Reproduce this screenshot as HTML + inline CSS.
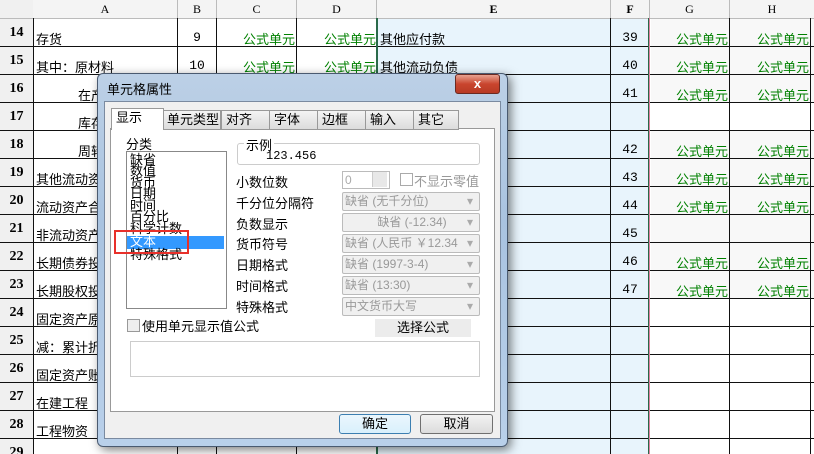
<!DOCTYPE html>
<html><head><meta charset="utf-8"><style>
html,body{margin:0;width:814px;height:454px;overflow:hidden}
body{background:#fff;font-family:"Liberation Sans","Noto Sans CJK SC",sans-serif;font-size:12px;position:relative}
.a{position:absolute;white-space:nowrap}
.rh{position:absolute;left:0;width:33px;background:#f0f0f0;font-weight:bold;font-family:"Liberation Serif","Noto Sans CJK SC",serif;font-size:14px;text-align:center;line-height:28px}
.hl{position:absolute;left:0;width:814px;height:1px;background:#111}
.vl{position:absolute;top:18px;width:1px;height:436px;background:#111}
.g{color:#008000;font-size:13px;position:absolute;text-align:right}
.t{font-size:13px;position:absolute}
.n{position:absolute;font-family:"Liberation Mono",monospace;font-size:13px;text-align:center}
.ch{position:absolute;top:0;height:18px;line-height:18px;text-align:center;font-family:"Liberation Serif",serif;font-size:12px;background:#f4f4f4;border-right:1px solid #bbb;border-bottom:1px solid #bbb}
.tab{position:absolute;top:110px;height:18px;line-height:18px;background:linear-gradient(#f4f4f4,#dcdcdc);border:1px solid #999;font-size:13px;padding-left:4px}
.sel{position:absolute;height:17px;border:1px solid #bbb;border-radius:2px;background:#f0f0f0;color:#999;font-size:12px;line-height:17px;padding-left:2px}
.sel:after{content:"▾";position:absolute;right:6px;color:#aaa}
.lb{position:absolute;font-size:13px}
.li{position:absolute;left:130px;font-size:13px;line-height:13px;height:13px}
</style></head><body>
<div class="ch" style="left:0;width:33px;background:#f0f0f0"></div>
<div class="ch" style="left:33px;width:144px">A</div>
<div class="ch" style="left:178px;width:38px">B</div>
<div class="ch" style="left:217px;width:79px">C</div>
<div class="ch" style="left:297px;width:79px">D</div>
<div class="ch" style="left:377px;width:233px;font-weight:bold">E</div>
<div class="ch" style="left:611px;width:38px;font-weight:bold">F</div>
<div class="ch" style="left:650px;width:79px">G</div>
<div class="ch" style="left:730px;width:84px">H</div>
<div class="a" style="left:378px;top:19px;width:271px;height:435px;background:#e8f4fc"></div>
<div class="a" style="left:651px;top:19px;width:163px;height:83px;background:#f8f8f8"></div>
<div class="a" style="left:651px;top:131px;width:163px;height:111px;background:#f8f8f8"></div>
<div class="a" style="left:651px;top:243px;width:163px;height:55px;background:#f8f8f8"></div>
<div class="rh" style="top:19px">14</div><div class="rh" style="top:47px">15</div><div class="rh" style="top:75px">16</div><div class="rh" style="top:103px">17</div><div class="rh" style="top:131px">18</div><div class="rh" style="top:159px">19</div><div class="rh" style="top:187px">20</div><div class="rh" style="top:215px">21</div><div class="rh" style="top:243px">22</div><div class="rh" style="top:271px">23</div><div class="rh" style="top:299px">24</div><div class="rh" style="top:327px">25</div><div class="rh" style="top:355px">26</div><div class="rh" style="top:383px">27</div><div class="rh" style="top:411px">28</div><div class="rh" style="top:439px;height:15px;overflow:hidden">29</div>
<div class="hl" style="top:46px"></div><div class="hl" style="top:74px"></div><div class="hl" style="top:102px"></div><div class="hl" style="top:130px"></div><div class="hl" style="top:158px"></div><div class="hl" style="top:186px"></div><div class="hl" style="top:214px"></div><div class="hl" style="top:242px"></div><div class="hl" style="top:270px"></div><div class="hl" style="top:298px"></div><div class="hl" style="top:326px"></div><div class="hl" style="top:354px"></div><div class="hl" style="top:382px"></div><div class="hl" style="top:410px"></div><div class="hl" style="top:438px"></div>
<div class="vl" style="left:33px"></div><div class="vl" style="left:177px"></div><div class="vl" style="left:216px"></div><div class="vl" style="left:296px"></div><div class="vl" style="left:376px;background:#2a6a4a"></div><div class="vl" style="left:377px;background:#2a6a4a"></div><div class="vl" style="left:610px"></div><div class="vl" style="left:648px;background:#2a6a4a"></div><div class="vl" style="left:649px;background:#e080a0"></div><div class="vl" style="left:729px"></div><div class="vl" style="left:810px"></div>
<div class="t" style="left:36px;top:29px">存货</div>
<div class="t" style="left:36px;top:57px">其中：原材料</div>
<div class="t" style="left:78px;top:85px">在产</div>
<div class="t" style="left:78px;top:113px">库存</div>
<div class="t" style="left:78px;top:141px">周转</div>
<div class="t" style="left:36px;top:169px">其他流动资</div>
<div class="t" style="left:36px;top:197px">流动资产合</div>
<div class="t" style="left:36px;top:225px">非流动资产</div>
<div class="t" style="left:36px;top:253px">长期债券投</div>
<div class="t" style="left:36px;top:281px">长期股权投</div>
<div class="t" style="left:36px;top:309px">固定资产原</div>
<div class="t" style="left:36px;top:337px">减：累计折</div>
<div class="t" style="left:36px;top:365px">固定资产账</div>
<div class="t" style="left:36px;top:393px">在建工程</div>
<div class="t" style="left:36px;top:421px">工程物资</div>
<div class="n" style="left:178px;width:38px;top:30px">9</div>
<div class="n" style="left:178px;width:38px;top:58px">10</div>
<div class="g" style="left:217px;width:78px;top:29px">公式单元</div><div class="g" style="left:297px;width:79px;top:29px">公式单元</div>
<div class="g" style="left:217px;width:78px;top:57px">公式单元</div><div class="g" style="left:297px;width:79px;top:57px">公式单元</div>
<div class="t" style="left:380px;top:29px">其他应付款</div>
<div class="t" style="left:380px;top:57px">其他流动负债</div>
<div class="n" style="left:611px;width:38px;top:30px">39</div><div class="n" style="left:611px;width:38px;top:58px">40</div><div class="n" style="left:611px;width:38px;top:86px">41</div><div class="n" style="left:611px;width:38px;top:142px">42</div><div class="n" style="left:611px;width:38px;top:170px">43</div><div class="n" style="left:611px;width:38px;top:198px">44</div><div class="n" style="left:611px;width:38px;top:226px">45</div><div class="n" style="left:611px;width:38px;top:254px">46</div><div class="n" style="left:611px;width:38px;top:282px">47</div>
<div class="g" style="left:650px;width:78px;top:29px">公式单元</div><div class="g" style="left:730px;width:79px;top:29px">公式单元</div>
<div class="g" style="left:650px;width:78px;top:57px">公式单元</div><div class="g" style="left:730px;width:79px;top:57px">公式单元</div>
<div class="g" style="left:650px;width:78px;top:85px">公式单元</div><div class="g" style="left:730px;width:79px;top:85px">公式单元</div>
<div class="g" style="left:650px;width:78px;top:141px">公式单元</div><div class="g" style="left:730px;width:79px;top:141px">公式单元</div>
<div class="g" style="left:650px;width:78px;top:169px">公式单元</div><div class="g" style="left:730px;width:79px;top:169px">公式单元</div>
<div class="g" style="left:650px;width:78px;top:197px">公式单元</div><div class="g" style="left:730px;width:79px;top:197px">公式单元</div>
<div class="g" style="left:650px;width:78px;top:253px">公式单元</div><div class="g" style="left:730px;width:79px;top:253px">公式单元</div>
<div class="g" style="left:650px;width:78px;top:281px">公式单元</div><div class="g" style="left:730px;width:79px;top:281px">公式单元</div>

<div class="a" style="left:97px;top:73px;width:409px;height:372px;border:1px solid #4a5a70;border-radius:6px;background:linear-gradient(#bcd0e6,#a9c3e0 40%,#b9d0ea);box-shadow:3px 3px 10px rgba(0,0,0,.5)"></div>
<div class="a" style="left:107px;top:79px;font-size:13px">单元格属性</div>
<div class="a" style="left:455px;top:74px;width:43px;height:18px;border:1px solid #6b2a22;border-radius:3px;background:linear-gradient(#e8a290,#c9452e 50%,#b83a24);color:#fff;text-align:center;font-weight:bold;font-size:13px;line-height:18px">x</div>
<div class="a" style="left:104px;top:101px;width:395px;height:336px;background:#f0f0f0;border:1px solid #7a8aa0"></div>
<div class="a" style="left:110px;top:128px;width:383px;height:282px;background:#fff;border:1px solid #999"></div>
<div class="tab" style="left:162px;width:53px">单元类型</div>
<div class="tab" style="left:221px;width:45px">对齐</div>
<div class="tab" style="left:269px;width:43px">字体</div>
<div class="tab" style="left:317px;width:43px">边框</div>
<div class="tab" style="left:365px;width:43px">输入</div>
<div class="tab" style="left:413px;width:40px">其它</div>
<div class="tab" style="left:111px;top:108px;width:47px;height:21px;background:#fff;border-bottom:none">显示</div>
<div class="lb" style="left:126px;top:134px">分类</div>
<div class="a" style="left:126px;top:151px;width:99px;height:156px;border:1px solid #888;background:#fff"></div>
<div class="a" style="left:127px;top:236px;width:97px;height:13px;background:#3399ff"></div>
<div class="li" style="top:153px">缺省</div>
<div class="li" style="top:164px">数值</div>
<div class="li" style="top:176px">货币</div>
<div class="li" style="top:187px">日期</div>
<div class="li" style="top:199px">时间</div>
<div class="li" style="top:210px">百分比</div>
<div class="li" style="top:222px">科学计数</div>
<div class="li" style="top:235px;color:#fff">文本</div>
<div class="li" style="top:248px">特殊格式</div>
<div class="a" style="left:114px;top:230px;width:71px;height:20px;border:2px solid #e8302a"></div>
<div class="a" style="left:237px;top:143px;width:241px;height:20px;border:1px solid #ccc;border-radius:3px"></div>
<div class="a" style="left:244px;top:135px;background:#fff;font-size:13px;padding:0 2px">示例</div>
<div class="a" style="left:266px;top:149px;font-family:'Liberation Mono',monospace;font-size:12px">123.456</div>
<div class="lb" style="left:236px;top:172px">小数位数</div>
<div class="lb" style="left:236px;top:193px">千分位分隔符</div>
<div class="lb" style="left:236px;top:214px">负数显示</div>
<div class="lb" style="left:236px;top:234px">货币符号</div>
<div class="lb" style="left:236px;top:255px">日期格式</div>
<div class="lb" style="left:236px;top:276px">时间格式</div>
<div class="lb" style="left:236px;top:297px">特殊格式</div>
<div class="a" style="left:342px;top:171px;width:44px;height:16px;border:1px solid #bbb;color:#aaa;font-size:12px;line-height:16px;padding-left:2px">0</div>
<div class="a" style="left:372px;top:172px;width:14px;height:15px;background:#e8e8e8;border-left:1px solid #ccc"></div>
<div class="a" style="left:400px;top:173px;width:11px;height:11px;border:1px solid #aaa"></div>
<div class="lb" style="left:414px;top:171px;color:#999">不显示零值</div>
<div class="sel" style="left:342px;top:192px;width:134px">缺省 (无千分位)</div>
<div class="sel" style="left:342px;top:213px;width:134px;text-align:center">缺省 (-12.34)</div>
<div class="sel" style="left:342px;top:234px;width:134px">缺省 (人民币 ￥12.34</div>
<div class="sel" style="left:342px;top:255px;width:134px">缺省 (1997-3-4)</div>
<div class="sel" style="left:342px;top:276px;width:134px">缺省 (13:30)</div>
<div class="sel" style="left:342px;top:297px;width:134px">中文货币大写</div>
<div class="a" style="left:127px;top:319px;width:11px;height:11px;border:1px solid #999;background:#eee"></div>
<div class="lb" style="left:142px;top:316px">使用单元显示值公式</div>
<div class="a" style="left:375px;top:319px;width:96px;height:18px;background:#ececec;text-align:center;font-size:13px;line-height:18px">选择公式</div>
<div class="a" style="left:130px;top:341px;width:348px;height:34px;border:1px solid #ccc"></div>
<div class="a" style="left:339px;top:414px;width:70px;height:18px;border:1px solid #3c7fb1;border-radius:3px;background:linear-gradient(#eaf6fd,#d9f0fc);text-align:center;font-size:13px;line-height:18px">确定</div>
<div class="a" style="left:420px;top:414px;width:71px;height:18px;border:1px solid #707070;border-radius:3px;background:linear-gradient(#f2f2f2,#dcdcdc);text-align:center;font-size:13px;line-height:18px">取消</div>
</body></html>
